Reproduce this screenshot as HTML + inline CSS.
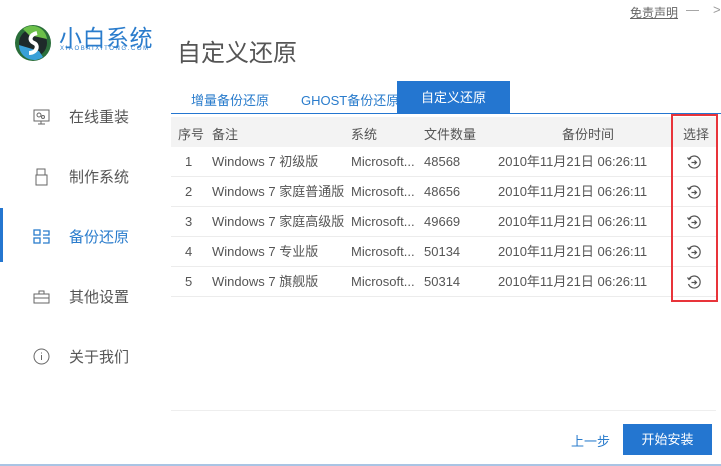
<!DOCTYPE html><html><head><meta charset="utf-8"><style>
body{margin:0;width:721px;height:466px;background:#fff;font-family:"Liberation Sans","Noto Sans CJK SC",sans-serif;position:relative;overflow:hidden;color:#555}
.a{position:absolute;white-space:nowrap}
.nav{font-size:15px;color:#555}
.cell{font-size:13px;color:#555;top:0}
.row{position:absolute;left:171px;width:546px;height:29px;border-bottom:1px solid #ececec}
.row .a{line-height:29px}
</style></head><body>
<div class="a" style="left:0;top:464px;width:721px;height:2px;background:#a9c4e4"></div>
<svg class="a" style="left:13px;top:23px" width="42" height="40" viewBox="0 0 42 40"><circle cx="20" cy="20" r="18" fill="#2a6e3a"/><circle cx="20" cy="20" r="14" fill="#1e2a2a"/><path d="M6 22 A15 15 0 0 0 30 34 L26 28 Z" fill="#3aa0d8"/><path d="M34 16 A15 15 0 0 0 10 6 L16 12 Z" fill="#6cc04a"/><path d="M24 10 C16 12 16 18 21 20 C26 22 24 30 16 30" stroke="#fff" stroke-width="4" fill="none"/></svg>
<div class="a" style="left:59px;top:19px;font-size:23px;color:#2a7ccc;letter-spacing:0.5px">小白系统</div>
<div class="a" style="left:60px;top:46px;font-size:6px;color:#2a7ccc;letter-spacing:1.6px">XIAOBAIXITONG.COM</div>
<div class="a" style="left:177px;top:33px;font-size:24px;color:#555">自定义还原</div>
<div class="a" style="left:630px;top:4px;font-size:12px;color:#666;text-decoration:underline">免责声明</div>
<div class="a" style="left:686px;top:2px;font-size:13px;color:#999">—</div>
<div class="a" style="left:713px;top:2px;font-size:13px;color:#999">&gt;</div>
<div class="a" style="left:0;top:208px;width:3px;height:54px;background:#2476d0"></div>
<svg class="a" style="left:33px;top:109px" width="18" height="16"><rect x="1" y="1" width="15" height="11" fill="none" stroke="#666"/><circle cx="6" cy="6" r="2" fill="none" stroke="#666"/><circle cx="10" cy="8" r="1.5" fill="none" stroke="#666"/><path d="M8 12v3M5 15h7" stroke="#666"/></svg>
<div class="a nav" style="left:69px;top:106px">在线重装</div>
<svg class="a" style="left:35px;top:168px" width="14" height="18"><rect x="2" y="1" width="8" height="6" fill="none" stroke="#666"/><rect x="1" y="7" width="11" height="10" fill="none" stroke="#666"/></svg>
<div class="a nav" style="left:69px;top:166px">制作系统</div>
<svg class="a" style="left:33px;top:229px" width="18" height="16"><rect x="1" y="1" width="6" height="5" fill="none" stroke="#2a7ccc" stroke-width="1.3"/><rect x="1" y="9" width="6" height="5" fill="none" stroke="#2a7ccc" stroke-width="1.3"/><path d="M10 2h6v4h-6M10 9h6v5h-6" fill="none" stroke="#2a7ccc" stroke-width="1.3"/></svg>
<div class="a nav" style="left:69px;top:226px;color:#2a7ccc">备份还原</div>
<svg class="a" style="left:33px;top:290px" width="18" height="14"><rect x="1" y="4" width="15" height="9" fill="none" stroke="#666"/><path d="M6 4V1h5v3M1 8h15" fill="none" stroke="#666"/></svg>
<div class="a nav" style="left:69px;top:286px">其他设置</div>
<svg class="a" style="left:33px;top:348px" width="17" height="17"><circle cx="8.5" cy="8.5" r="7.5" fill="none" stroke="#666"/><path d="M8.5 7v5M8.5 4.5v1" stroke="#666"/></svg>
<div class="a nav" style="left:69px;top:346px">关于我们</div>
<div class="a" style="left:191px;top:90px;font-size:13px;color:#2a7ccc">增量备份还原</div>
<div class="a" style="left:301px;top:90px;font-size:13px;color:#2a7ccc">GHOST备份还原</div>
<div class="a" style="left:397px;top:81px;width:113px;height:33px;background:#2476d0;color:#fff;font-size:13px;text-align:center;line-height:34px">自定义还原</div>
<div class="a" style="left:171px;top:113px;width:550px;height:1px;background:#2476d0"></div>
<div class="a" style="left:171px;top:117px;width:546px;height:30px;background:#f3f3f3"></div>
<div class="a" style="left:178px;top:124px;font-size:13px">序号</div>
<div class="a" style="left:212px;top:124px;font-size:13px">备注</div>
<div class="a" style="left:351px;top:124px;font-size:13px">系统</div>
<div class="a" style="left:424px;top:124px;font-size:13px">文件数量</div>
<div class="a" style="left:562px;top:124px;font-size:13px">备份时间</div>
<div class="a" style="left:683px;top:124px;font-size:13px">选择</div>
<div id="rows"></div>
<script>
var d=[["1","Windows 7 初级版","48568"],["2","Windows 7 家庭普通版","48656"],["3","Windows 7 家庭高级版","49669"],["4","Windows 7 专业版","50134"],["5","Windows 7 旗舰版","50314"]],h="";
d.forEach(function(r,i){h+='<div class="row" style="top:'+(147+i*30)+'px"><div class="a cell" style="left:14px">'+r[0]+'</div><div class="a cell" style="left:41px">'+r[1]+'</div><div class="a cell" style="left:180px">Microsoft...</div><div class="a cell" style="left:253px">'+r[2]+'</div><div class="a cell" style="left:327px">2010年11月21日 06:26:11</div><svg class="a" style="left:515px;top:7px" width="16" height="16" viewBox="0 0 16 16"><path d="M3 5A6 6 0 1 1 2.5 10" fill="none" stroke="#555" stroke-width="1.2"/><path d="M1.5 3.5L3 5.5 5 4" fill="none" stroke="#555" stroke-width="1.2"/><path d="M5.5 8.5h5M8.5 6.5l2 2-2 2" fill="none" stroke="#555" stroke-width="1.2"/></svg></div>'});
document.getElementById("rows").innerHTML=h;
</script>
<div class="a" style="left:671px;top:114px;width:43px;height:184px;border:2px solid #e8343a"></div>
<div class="a" style="left:171px;top:410px;width:545px;height:1px;background:#eee"></div>
<div class="a" style="left:571px;top:431px;font-size:13px;color:#2a7ccc">上一步</div>
<div class="a" style="left:623px;top:424px;width:89px;height:31px;background:#2476d0;color:#fff;font-size:13px;text-align:center;line-height:31px">开始安装</div>
</body></html>
